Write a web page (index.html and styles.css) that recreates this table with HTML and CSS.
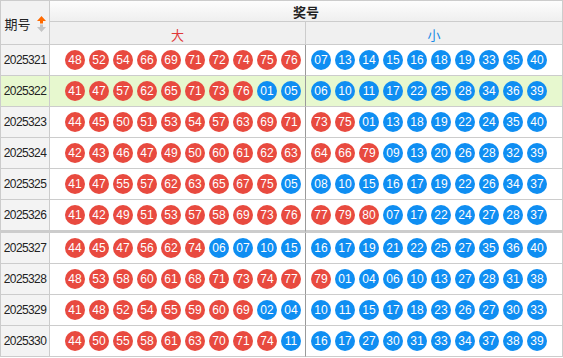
FILE: index.html
```html
<!DOCTYPE html>
<html lang="zh">
<head>
<meta charset="utf-8">
<title>开奖号码</title>
<link rel="stylesheet" href="styles.css">
</head>
<body>
<div class="tbl">
  <div class="c qh"><span>期号</span><svg class="sort" width="9" height="16" viewBox="0 0 9 16"><polygon points="4.5,0 9,5 6,5 6,7.5 3,7.5 3,5 0,5" fill="#ff6a00"/><polygon points="3,8.5 6,8.5 6,11 9,11 4.5,16 0,11 3,11" fill="#c4c4c4"/></svg></div>
  <div class="c jh">奖号</div>
  <div class="c dh">大</div>
  <div class="c xh">小</div>

  <div class="c q">2025321</div>
  <div class="c big"><span class="b r">48</span><span class="b r">52</span><span class="b r">54</span><span class="b r">66</span><span class="b r">69</span><span class="b r">71</span><span class="b r">72</span><span class="b r">74</span><span class="b r">75</span><span class="b r">76</span></div>
  <div class="c sml"><span class="b u">07</span><span class="b u">13</span><span class="b u">14</span><span class="b u">15</span><span class="b u">16</span><span class="b u">18</span><span class="b u">19</span><span class="b u">33</span><span class="b u">35</span><span class="b u">40</span></div>

  <div class="c q hl">2025322</div>
  <div class="c big hl"><span class="b r">41</span><span class="b r">47</span><span class="b r">57</span><span class="b r">62</span><span class="b r">65</span><span class="b r">71</span><span class="b r">73</span><span class="b r">76</span><span class="b u">01</span><span class="b u">05</span></div>
  <div class="c sml hl"><span class="b u">06</span><span class="b u">10</span><span class="b u">11</span><span class="b u">17</span><span class="b u">22</span><span class="b u">25</span><span class="b u">28</span><span class="b u">34</span><span class="b u">36</span><span class="b u">39</span></div>

  <div class="c q">2025323</div>
  <div class="c big"><span class="b r">44</span><span class="b r">45</span><span class="b r">50</span><span class="b r">51</span><span class="b r">53</span><span class="b r">54</span><span class="b r">57</span><span class="b r">63</span><span class="b r">69</span><span class="b r">71</span></div>
  <div class="c sml"><span class="b r">73</span><span class="b r">75</span><span class="b u">01</span><span class="b u">13</span><span class="b u">18</span><span class="b u">19</span><span class="b u">22</span><span class="b u">24</span><span class="b u">35</span><span class="b u">40</span></div>

  <div class="c q">2025324</div>
  <div class="c big"><span class="b r">42</span><span class="b r">43</span><span class="b r">46</span><span class="b r">47</span><span class="b r">49</span><span class="b r">50</span><span class="b r">60</span><span class="b r">61</span><span class="b r">62</span><span class="b r">63</span></div>
  <div class="c sml"><span class="b r">64</span><span class="b r">66</span><span class="b r">79</span><span class="b u">09</span><span class="b u">13</span><span class="b u">20</span><span class="b u">26</span><span class="b u">28</span><span class="b u">32</span><span class="b u">39</span></div>

  <div class="c q">2025325</div>
  <div class="c big"><span class="b r">41</span><span class="b r">47</span><span class="b r">55</span><span class="b r">57</span><span class="b r">62</span><span class="b r">63</span><span class="b r">65</span><span class="b r">67</span><span class="b r">75</span><span class="b u">05</span></div>
  <div class="c sml"><span class="b u">08</span><span class="b u">10</span><span class="b u">15</span><span class="b u">16</span><span class="b u">17</span><span class="b u">19</span><span class="b u">22</span><span class="b u">26</span><span class="b u">34</span><span class="b u">37</span></div>

  <div class="c q sep">2025326</div>
  <div class="c big sep"><span class="b r">41</span><span class="b r">42</span><span class="b r">49</span><span class="b r">51</span><span class="b r">53</span><span class="b r">57</span><span class="b r">58</span><span class="b r">69</span><span class="b r">73</span><span class="b r">76</span></div>
  <div class="c sml sep"><span class="b r">77</span><span class="b r">79</span><span class="b r">80</span><span class="b u">07</span><span class="b u">17</span><span class="b u">22</span><span class="b u">24</span><span class="b u">27</span><span class="b u">28</span><span class="b u">37</span></div>

  <div class="c q">2025327</div>
  <div class="c big"><span class="b r">44</span><span class="b r">45</span><span class="b r">47</span><span class="b r">56</span><span class="b r">62</span><span class="b r">74</span><span class="b u">06</span><span class="b u">07</span><span class="b u">10</span><span class="b u">15</span></div>
  <div class="c sml"><span class="b u">16</span><span class="b u">17</span><span class="b u">19</span><span class="b u">21</span><span class="b u">22</span><span class="b u">25</span><span class="b u">27</span><span class="b u">35</span><span class="b u">36</span><span class="b u">40</span></div>

  <div class="c q">2025328</div>
  <div class="c big"><span class="b r">48</span><span class="b r">53</span><span class="b r">58</span><span class="b r">60</span><span class="b r">61</span><span class="b r">68</span><span class="b r">71</span><span class="b r">73</span><span class="b r">74</span><span class="b r">77</span></div>
  <div class="c sml"><span class="b r">79</span><span class="b u">01</span><span class="b u">04</span><span class="b u">06</span><span class="b u">10</span><span class="b u">13</span><span class="b u">27</span><span class="b u">28</span><span class="b u">31</span><span class="b u">38</span></div>

  <div class="c q">2025329</div>
  <div class="c big"><span class="b r">41</span><span class="b r">48</span><span class="b r">52</span><span class="b r">54</span><span class="b r">55</span><span class="b r">59</span><span class="b r">60</span><span class="b r">69</span><span class="b u">02</span><span class="b u">04</span></div>
  <div class="c sml"><span class="b u">10</span><span class="b u">11</span><span class="b u">15</span><span class="b u">17</span><span class="b u">18</span><span class="b u">23</span><span class="b u">26</span><span class="b u">27</span><span class="b u">30</span><span class="b u">33</span></div>

  <div class="c q">2025330</div>
  <div class="c big"><span class="b r">44</span><span class="b r">50</span><span class="b r">55</span><span class="b r">58</span><span class="b r">61</span><span class="b r">63</span><span class="b r">70</span><span class="b r">71</span><span class="b r">74</span><span class="b u">11</span></div>
  <div class="c sml"><span class="b u">16</span><span class="b u">17</span><span class="b u">27</span><span class="b u">30</span><span class="b u">31</span><span class="b u">33</span><span class="b u">34</span><span class="b u">37</span><span class="b u">38</span><span class="b u">39</span></div>
</div>
</body>
</html>
```

FILE: styles.css
```css
* { box-sizing: border-box; }
html, body { margin: 0; padding: 0; background: #fff; }
body { font-family: "Liberation Sans", "Noto Sans CJK SC", sans-serif; color: #333; }

.tbl {
  display: grid;
  grid-template-columns: 49px 256px 257px;
  width: 563px;
  border-top: 1px solid #ccc;
  border-left: 1px solid #ccc;
}

.c {
  border-right: 1px solid #ccc;
  border-bottom: 1px solid #ccc;
  display: flex;
  align-items: center;
}

.qh {
  grid-row: span 2;
  background: #f2f2f2;
  justify-content: center;
  gap: 6px;
  font-family: "Noto Sans CJK SC", sans-serif;
  font-size: 13px;
  color: #222;
}
.qh span { margin-top: 2px; }
.sort { display: block; margin-top: 2px; }

.jh {
  grid-column: span 2;
  height: 21px;
  justify-content: center;
  background: linear-gradient(#fdfdfd, #efefef);
  font-family: "Noto Sans CJK SC", sans-serif;
  font-weight: bold;
  font-size: 13px;
  color: #222;
}

.dh, .xh {
  height: 23px;
  justify-content: center;
  background: #f0f0f0;
  font-family: "Noto Sans CJK SC", sans-serif;
  font-size: 13px;
  padding-top: 3px;
}
.dh { color: #e0393a; }
.xh { color: #1a8be6; }

.q {
  height: 31px;
  justify-content: center;
  background: #f3f3f3;
  font-size: 12px;
  letter-spacing: -0.6px;
  color: #222;
}

.big, .sml {
  height: 31px;
  gap: 4px;
  background: #fff;
}
.big {
  justify-content: flex-end;
  padding-right: 4px;
  border-right-color: #9a9a9a;
}
.sml {
  justify-content: flex-start;
  padding-left: 5px;
}

.hl { background: #e7f8cf; }

.sep {
  height: 33px;
  border-bottom: 3px solid #cccccc;
}

.b {
  width: 20px;
  height: 20px;
  border-radius: 50%;
  color: #fff;
  font-size: 12px;
  line-height: 20px;
  text-align: center;
  flex: none;
}
.r { background: #e84a3f; }
.u { background: #0f8ef2; }
```
